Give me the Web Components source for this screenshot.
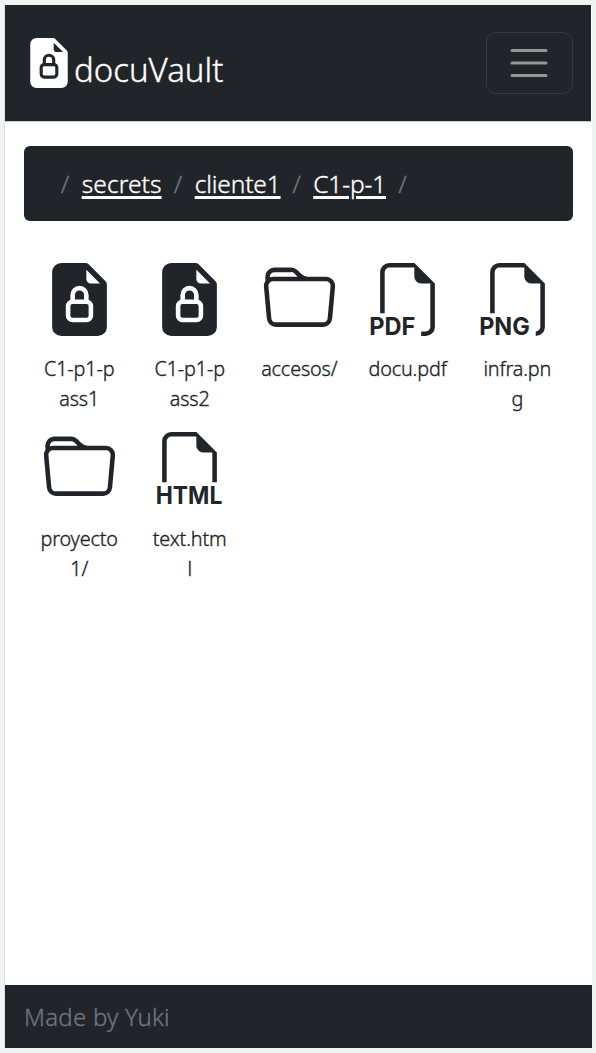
<!DOCTYPE html>
<html lang="es">
<head>
<meta charset="utf-8">
<title>docuVault</title>
<style>
html,body{margin:0;height:1053px;overflow:hidden}
body{background:#f1f2f2;font-family:"Noto Sans","Open Sans",sans-serif;font-weight:300;-webkit-text-stroke:.35px currentColor;color:#212529}
</style>
</head>
<body>
<vault-app></vault-app>
<script>
const OUTLINES = {
  pdf: 'M14 4.5V14a2 2 0 0 1-2 2h-1v-1h1a1 1 0 0 0 1-1V4.5h-2A1.5 1.5 0 0 1 9.5 3V1H4a1 1 0 0 0-1 1v9H2V2a2 2 0 0 1 2-2h5.5z',
  png: 'M14 4.5V14a2 2 0 0 1-2 2v-1a1 1 0 0 0 1-1V4.5h-2A1.5 1.5 0 0 1 9.5 3V1H4a1 1 0 0 0-1 1v9H2V2a2 2 0 0 1 2-2h5.5z',
  html: 'M14 4.5V11h-1V4.5h-2A1.5 1.5 0 0 1 9.5 3V1H4a1 1 0 0 0-1 1v9H2V2a2 2 0 0 1 2-2h5.5z'
};
const TAGS = { pdf: ['PDF', -.4, 10.1], png: ['PNG', -.4, 11.1], html: ['HTML', .6, 14.6] };
const FOLDER = 'M.54 3.87.5 3a2 2 0 0 1 2-2h3.672a2 2 0 0 1 1.414.586l.828.828A2 2 0 0 0 9.828 3h3.982a2 2 0 0 1 1.992 2.181l-.637 7A2 2 0 0 1 13.174 14H2.826a2 2 0 0 1-1.991-1.819l-.637-7a2 2 0 0 1 .342-1.31zM2.19 4a1 1 0 0 0-.996 1.09l.637 7a1 1 0 0 0 .995.91h10.348a1 1 0 0 0 .995-.91l.637-7A1 1 0 0 0 13.81 4zm4.69-1.707A1 1 0 0 0 6.172 2H2.5a1 1 0 0 0-1 .981l.006.139q.323-.119.684-.12h5.396z';

customElements.define('vault-icon', class extends HTMLElement {
  connectedCallback() {
    const kind = this.getAttribute('kind');
    let art;
    if (kind === 'lock') {
      art = `<path fill-rule="evenodd" d="M9.293 0H4a2 2 0 0 0-2 2v12a2 2 0 0 0 2 2h8a2 2 0 0 0 2-2V4.707A1 1 0 0 0 13.707 4L10 .293A1 1 0 0 0 9.293 0M9.5 3.5v-2l3 3h-2a1 1 0 0 1-1-1"/>
        <g class="cut"><rect x="5.5" y="8.5" width="5" height="4" rx=".95"/><path d="M6.5 8.5V7a1.5 1.5 0 0 1 3 0v1.5"/></g>`;
    } else if (kind === 'folder') {
      art = `<path d="${FOLDER}"/>`;
    } else {
      const [label, x, len] = TAGS[kind];
      art = `<path d="${OUTLINES[kind]}"/><text x="${x}" y="15.86" textLength="${len}" lengthAdjust="spacingAndGlyphs">${label}</text>`;
    }
    this.attachShadow({mode:'open'}).innerHTML = `<style>
      :host{display:block;width:var(--size,73px);height:var(--size,73px);-webkit-text-stroke:0;letter-spacing:0}
      svg{display:block;width:100%;height:100%;overflow:visible;fill:currentColor}
      .cut{fill:none;stroke:var(--cut,#fff);stroke-width:1}
      text{font:700 5.45px Inter,"Liberation Sans",sans-serif}
    </style><svg viewBox="0 0 16 16">${art}</svg>`;
  }
});

customElements.define('vault-nav', class extends HTMLElement {
  constructor() {
    super();
    this.attachShadow({mode:'open'}).innerHTML = `<style>
      :host{display:flex;align-items:center;justify-content:space-between;height:116px;box-sizing:border-box;padding:0 18px 0 19px;background:#212529;color:#fff}
      .brand{display:flex;align-items:center}
      vault-icon{--size:50px;--cut:#212529}
      .name{font-size:33px;line-height:50px;padding-top:14px}
      button{all:unset;box-sizing:border-box;width:87px;height:62px;border:1.5px solid #35393d;border-radius:10px;display:grid;place-items:center}
      svg{display:block;margin-right:1px}
    </style>
    <div class="brand"><vault-icon kind="lock"></vault-icon><span class="name"><slot></slot></span></div>
    <button aria-label="Menu"><svg width="38" height="30" viewBox="0 0 38 30" stroke="#949698" stroke-width="3" stroke-linecap="round"><path d="M2 2.6h34M2 15h34M2 27.4h34"/></svg></button>`;
  }
});

customElements.define('vault-crumbs', class extends HTMLElement {
  constructor() {
    super();
    this.attachShadow({mode:'open'}).innerHTML = `<style>
      :host{display:flex;align-items:center;height:75px;box-sizing:border-box;padding:1px 0 0 37px;border-radius:6px;background:#212529;color:#fff;font-size:24.5px;line-height:36px}
      i{font-style:normal;color:#6c757d;width:21px;white-space:pre}
      a{text-decoration:underline;text-decoration-thickness:2.5px;text-underline-offset:3px;white-space:nowrap}
      a:nth-of-type(1){width:92px;letter-spacing:.1px}a:nth-of-type(2){width:97.5px;letter-spacing:-.15px}a:nth-of-type(3){width:85px;letter-spacing:-.15px}
    </style><i>/</i><a>secrets</a><i>/</i><a>cliente1</a><i>/</i><a>C1-p-1</a><i>/</i>`;
  }
});

customElements.define('vault-item', class extends HTMLElement {
  connectedCallback() {
    this.attachShadow({mode:'open'}).innerHTML = `<style>
      :host{display:flex;flex-direction:column;align-items:center;gap:18.5px;height:169.5px;font-size:19.8px;line-height:30px;text-align:center;letter-spacing:-.15px}
      span{white-space:nowrap}
    </style><vault-icon kind="${this.getAttribute('kind')}"></vault-icon><span><slot></slot></span>`;
  }
});

customElements.define('vault-footer', class extends HTMLElement {
  constructor() {
    super();
    this.attachShadow({mode:'open'}).innerHTML = `<style>
      :host{display:flex;align-items:center;height:63px;box-sizing:border-box;padding:0 0 1px 19px;background:#212529;color:#6c757d;font-size:24px;letter-spacing:.25px}
    </style><span><slot></slot></span>`;
  }
});

customElements.define('vault-app', class extends HTMLElement {
  constructor() {
    super();
    this.attachShadow({mode:'open'}).innerHTML = `<style>
      :host{display:flex;flex-direction:column;box-sizing:border-box;width:588px;height:1043px;margin:5px 0 0 4px;border-left:1px solid #dcdfdf;background:#fff}
      vault-nav{margin-right:1px;border-bottom:1px solid #c9cacb;box-sizing:content-box}
      vault-crumbs{margin:24.4px 19.5px 0 18.7px}
      main{display:grid;grid-template-columns:110px 111px 108.2px 108.4px 111px;margin:41.4px 0 0 19.2px;align-content:start;flex:1}
    </style>
    <vault-nav>docuVault</vault-nav>
    <vault-crumbs></vault-crumbs>
    <main>
      <vault-item kind="lock">C1-p1-p<br>ass1</vault-item>
      <vault-item kind="lock">C1-p1-p<br>ass2</vault-item>
      <vault-item kind="folder">accesos/</vault-item>
      <vault-item kind="pdf">docu.pdf</vault-item>
      <vault-item kind="png">infra.pn<br>g</vault-item>
      <vault-item kind="folder">proyecto<br>1/</vault-item>
      <vault-item kind="html">text.htm<br>l</vault-item>
    </main>
    <vault-footer>Made by Yuki</vault-footer>`;
  }
});
</script>
</body>
</html>
